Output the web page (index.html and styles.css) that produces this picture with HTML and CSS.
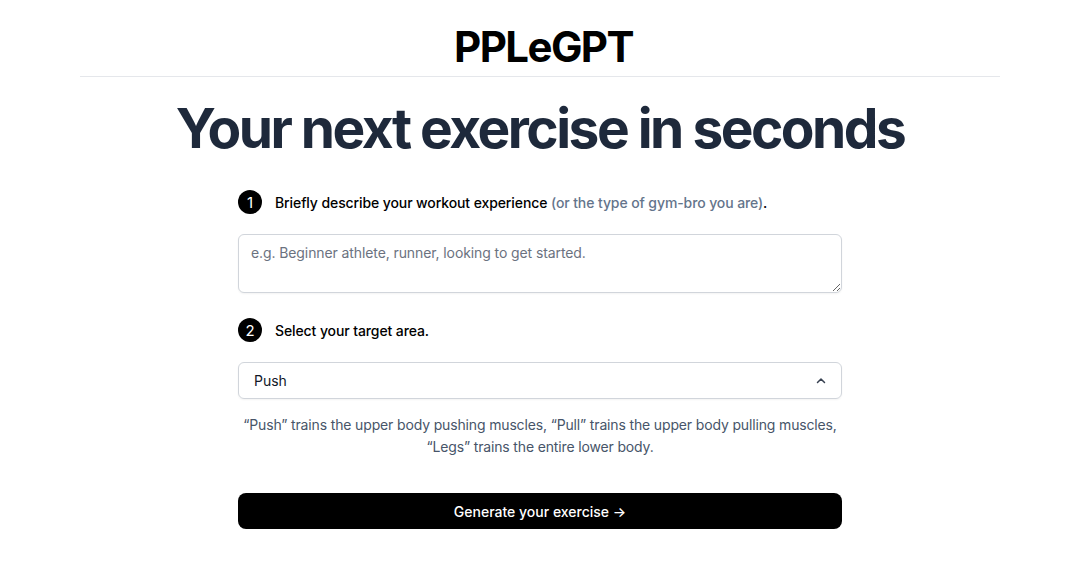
FILE: index.html
```html
<!DOCTYPE html>
<html>
<head>
<meta charset="utf-8">
<link rel="stylesheet" href="styles.css">
</head>
<body>
<header class="top">
  <h2 class="brand">PPLeGPT</h2>
</header>
<main class="main">
  <h1 class="title">Your next exercise in seconds</h1>
  <div class="form">
    <div class="step">
      <span class="num">1</span>
      <p class="label">Briefly describe your workout experience <span class="muted">(or the type of gym-bro you are)</span>.</p>
    </div>
    <textarea class="area" placeholder="e.g. Beginner athlete, runner, looking to get started."></textarea>
    <div class="step step2">
      <span class="num">2</span>
      <p class="label">Select your target area.</p>
    </div>
    <div class="select">
      <span>Push</span>
      <svg class="chev" width="12" height="12" viewBox="0 0 12 12"><path d="M2.5 7.5 L6 4 L9.5 7.5" fill="none" stroke="#374151" stroke-width="1.5" stroke-linecap="round" stroke-linejoin="round"/></svg>
    </div>
    <p class="help">“Push” trains the upper body pushing muscles, “Pull” trains the upper body pulling muscles, “Legs” trains the entire lower body.</p>
    <button class="btn">Generate your exercise →</button>
  </div>
</main>
</body>
</html>
```
FILE: styles.css
```css
* { box-sizing: border-box; }
html, body { margin: 0; padding: 0; background: #fff; }
body { font-family: Inter, "Liberation Sans", sans-serif; color: #000; }
.top {
  width: 920px;
  margin: 0 auto;
  border-bottom: 1px solid #e5e7eb;
  display: flex;
  justify-content: center;
  padding-top: 22px;
  padding-left: 7px;
  height: 77px;
}
.brand {
  margin: 0;
  font-size: 42px;
  font-weight: 700;
  line-height: 50px;
  letter-spacing: -1.6px;
}
.main {
  display: flex;
  flex-direction: column;
  align-items: center;
}
.title {
  margin: 19px 0 0;
  font-size: 55px;
  line-height: 64px;
  font-weight: 700;
  color: #1e293b;
  letter-spacing: -2.5px;
}
.form {
  width: 604px;
  margin-top: 30px;
  display: flex;
  flex-direction: column;
}
.step {
  display: flex;
  align-items: center;
  gap: 13px;
  height: 24px;
}
.num {
  width: 24px;
  height: 24px;
  border-radius: 50%;
  background: #000;
  color: #fff;
  font-size: 15px;
  display: flex;
  align-items: center;
  justify-content: center;
}
.label {
  margin: 0;
  font-size: 14px;
  font-weight: 500;
  letter-spacing: -0.1px;
}
.muted { color: #64748b; font-weight: 500; }
.area {
  margin-top: 20px;
  height: 59px;
  width: 100%;
  border: 1px solid #d1d5db;
  border-radius: 6px;
  padding: 9px 12px;
  font-family: inherit;
  font-size: 14px;
  letter-spacing: -0.1px;
  resize: vertical;
  box-shadow: 0 1px 2px rgba(0,0,0,0.05);
}
.area::placeholder { color: #6b7280; }
.step2 { margin-top: 25px; }
.select {
  margin-top: 20px;
  height: 37px;
  border: 1px solid #d1d5db;
  border-radius: 6px;
  display: flex;
  align-items: center;
  justify-content: space-between;
  padding: 0 14px 0 15px;
  font-size: 14px;
  color: #111827;
  box-shadow: 0 1px 2px rgba(0,0,0,0.05);
}
.help {
  margin: 15px -10px 0;
  text-align: center;
  font-size: 14px;
  line-height: 22px;
  letter-spacing: -0.15px;
  color: #475569;
}
.btn {
  margin-top: 35px;
  height: 36px;
  width: 100%;
  border: none;
  border-radius: 8px;
  background: #000;
  color: #fff;
  font-family: inherit;
  font-size: 14px;
  font-weight: 500;
}
```
